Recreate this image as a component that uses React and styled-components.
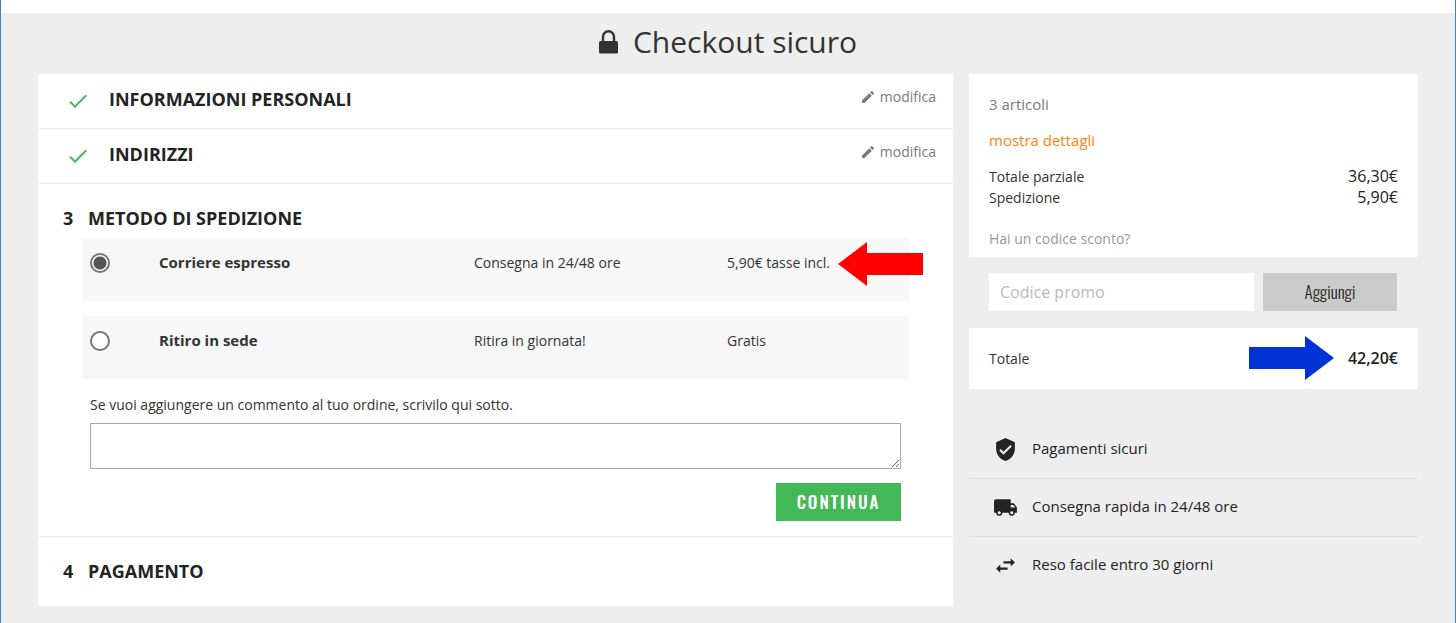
import React from "react";
import styled, { createGlobalStyle, css } from "styled-components";
import {
  MdCheck,
  MdEdit,
  MdLocalShipping,
  MdSwapHoriz,
  MdVerifiedUser,
} from "react-icons/md";

const shippingOptions = [
  {
    id: "espresso",
    name: "Corriere espresso",
    delay: "Consegna in 24/48 ore",
    price: "5,90€ tasse incl.",
    highlighted: true,
  },
  {
    id: "sede",
    name: "Ritiro in sede",
    delay: "Ritira in giornata!",
    price: "Gratis",
  },
];

const reassurances = [
  { icon: MdVerifiedUser, text: "Pagamenti sicuri" },
  { icon: MdLocalShipping, text: "Consegna rapida in 24/48 ore" },
  { icon: MdSwapHoriz, text: "Reso facile entro 30 giorni" },
];

const LockIcon = () => (
  <svg width="19" height="24" viewBox="0 0 19 24" aria-hidden="true">
    <path
      d="M4 11V6.7a5.5 5.5 0 0 1 11 0V11"
      fill="none"
      stroke="currentColor"
      strokeWidth="2.4"
    />
    <rect y="11" width="19" height="12.5" rx="1.5" fill="currentColor" />
  </svg>
);

const CompletedStep = ({ title }) => (
  <DoneStep>
    <CheckIcon />
    <StepTitle>{title}</StepTitle>
    <EditLink href="#">
      <MdEdit size={16} />
      modifica
    </EditLink>
  </DoneStep>
);

const App = () => {
  return (
    <Page>
      <GlobalStyle />
      <Title>
        <LockIcon />
        Checkout sicuro
      </Title>
      <Columns>
        <Steps>
          <CompletedStep title="Informazioni personali" />
          <CompletedStep title="Indirizzi" />

          <ShippingStep>
            <NumberedTitle>
              <span>3</span>Metodo di spedizione
            </NumberedTitle>
            <Options>
              {shippingOptions.map((option) => (
                <Option key={option.id}>
                  <Radio
                    type="radio"
                    name="shipping"
                    defaultChecked={option.id === "espresso"}
                  />
                  <OptionName>{option.name}</OptionName>
                  <span>{option.delay}</span>
                  <Price>
                    {option.price}
                    {option.highlighted && (
                      <RedArrow viewBox="0 0 85 44" aria-hidden="true">
                        <path d="M0 22L29 0V11H85V33H29V44Z" />
                      </RedArrow>
                    )}
                  </Price>
                </Option>
              ))}
            </Options>
            <Comment>
              <label htmlFor="comment">
                Se vuoi aggiungere un commento al tuo ordine, scrivilo qui
                sotto.
              </label>
              <textarea id="comment" />
              <ContinueButton type="submit">Continua</ContinueButton>
            </Comment>
          </ShippingStep>

          <PaymentStep>
            <NumberedTitle>
              <span>4</span>Pagamento
            </NumberedTitle>
          </PaymentStep>
        </Steps>

        <aside>
          <Summary>
            <Count>3 articoli</Count>
            <DetailsLink href="#">mostra dettagli</DetailsLink>
            <Line>
              Totale parziale <Amount>36,30€</Amount>
            </Line>
            <Line>
              Spedizione <Amount>5,90€</Amount>
            </Line>
            <PromoLink href="#">Hai un codice sconto?</PromoLink>
          </Summary>

          <Promo>
            <input placeholder="Codice promo" aria-label="Codice promo" />
            <AddButton type="submit">Aggiungi</AddButton>
          </Promo>

          <Total>
            Totale
            <Amount $bold>
              <BlueArrow viewBox="0 0 85 44" aria-hidden="true">
                <path d="M85 22L56 0V11H0V33H56V44Z" />
              </BlueArrow>
              42,20€
            </Amount>
          </Total>

          <Reassurance>
            {reassurances.map(({ icon: Icon, text }) => (
              <li key={text}>
                <Icon size={25} />
                {text}
              </li>
            ))}
          </Reassurance>
        </aside>
      </Columns>
    </Page>
  );
};

export default App;

const GlobalStyle = createGlobalStyle`
  * {
    box-sizing: border-box;
  }
  body {
    margin: 0;
    background: #eee;
    color: #333;
    font-family: "Open Sans", sans-serif;
    font-size: 14px;
    line-height: 21px;
  }
  h1, h2, ul {
    margin: 0;
    padding: 0;
  }
  a {
    text-decoration: none;
  }
  input, textarea, button {
    margin: 0;
    border: 0;
    border-radius: 0;
    font-family: inherit;
  }
`;

const Page = styled.div`
  min-height: 100vh;
  padding: 0 37px 17px;
  border: 1px solid #3f82cc;
  border-width: 0 1px;
  background: linear-gradient(#fff 13px, #eee 13px);
`;

const Title = styled.h1`
  display: flex;
  align-items: center;
  justify-content: center;
  gap: 15px;
  padding: 22px 0 12px;
  font-size: 30px;
  font-weight: 500;
  line-height: 40px;
`;

const Columns = styled.div`
  display: grid;
  grid-template-columns: 915fr 449fr;
  gap: 16px;
  align-items: start;
`;

const Steps = styled.main`
  background: #fff;

  > section + section {
    border-top: 1px solid #eee;
  }
`;

const DoneStep = styled.section`
  display: flex;
  align-items: flex-start;
  padding: 12px 17px 15px 28px;
`;

const CheckIcon = styled(MdCheck)`
  width: 24px;
  height: 24px;
  margin: 3px 19px 0 0;
  color: #42b856;
`;

const stepHeading = css`
  color: #232323;
  font-size: 18px;
  font-weight: 700;
  line-height: 26px;
  text-transform: uppercase;
`;

const StepTitle = styled.h2`
  ${stepHeading}
`;

const EditLink = styled.a`
  display: flex;
  align-items: center;
  gap: 4px;
  margin-left: auto;
  color: #7a7a7a;
`;

const ShippingStep = styled.section`
  padding: 21px 44px 15px 25px;
`;

const PaymentStep = styled.section`
  padding: 21px 25px 22px;
`;

const NumberedTitle = styled.h2`
  ${stepHeading}

  span {
    display: inline-block;
    width: 25px;
  }
`;

const Options = styled.div`
  display: grid;
  gap: 15px;
  margin: 7px 0 15px 19px;
`;

const Option = styled.label`
  display: grid;
  grid-template-columns: 69px 315fr 253fr 174fr;
  align-items: center;
  padding: 14px 8px 28px;
  background: #f7f7f7;
`;

const Radio = styled.input`
  appearance: none;
  width: 20px;
  height: 20px;
  border: 2px solid #757575;
  border-radius: 50%;
  background: #fff;

  &:checked {
    background: radial-gradient(circle, #555 6px, #fff 7px);
  }
`;

const OptionName = styled.span`
  font-size: 15px;
  font-weight: 700;
`;

const Price = styled.span`
  position: relative;
`;

const arrow = css`
  position: absolute;
  width: 85px;
  height: 44px;
`;

const RedArrow = styled.svg`
  ${arrow}
  top: -10px;
  left: 111px;
  fill: #f00;
`;

const BlueArrow = styled.svg`
  ${arrow}
  top: -12px;
  right: calc(100% + 14px);
  fill: #0033d6;
`;

const Comment = styled.div`
  display: flex;
  flex-direction: column;
  gap: 8px;
  margin: 0 8px 0 27px;

  textarea {
    height: 46px;
    border: 1px solid #aaa;
    background: #fff;
  }
`;

const ContinueButton = styled.button`
  align-self: flex-end;
  width: 125px;
  height: 38px;
  margin-top: 6px;
  padding: 0 0 2px;
  background: #42b856;
  color: #fff;
  font-family: Oswald, sans-serif;
  font-size: 17px;
  font-weight: 500;
  letter-spacing: 2px;
  text-transform: uppercase;
`;

const Summary = styled.section`
  display: flex;
  flex-direction: column;
  padding: 20px 20px 8px;
  background: #fff;
`;

const Count = styled.span`
  color: #7a7a7a;
  font-size: 15px;
`;

const DetailsLink = styled.a`
  margin: 15px 0;
  color: #ff8212;
  font-size: 15px;
`;

const Line = styled.div`
  display: flex;
  justify-content: space-between;
`;

const Amount = styled.span`
  position: relative;
  color: #232323;
  font-size: 16px;
  font-weight: ${(props) => (props.$bold ? 600 : 400)};
`;

const PromoLink = styled.a`
  margin-top: 20px;
  color: #999;
`;

const Promo = styled.form`
  display: flex;
  gap: 9px;
  padding: 16px 21px 17px 20px;

  input {
    flex: 1;
    min-width: 0;
    height: 38px;
    padding: 0 11px;
    background: #fff;
    font-size: 16px;
  }
  input::placeholder {
    color: #bbb;
  }
`;

const AddButton = styled.button`
  width: 134px;
  height: 38px;
  padding: 0 0 2px;
  background: #cbcbcb;
  color: #232323;
  font-family: Oswald, sans-serif;
  font-size: 17px;
  font-weight: 300;
`;

const Total = styled(Line)`
  padding: 20px;
  background: #fff;
`;

const Reassurance = styled.ul`
  margin-top: 31px;
  color: #232323;
  font-size: 15px;
  line-height: 22px;
  list-style: none;

  li {
    display: flex;
    align-items: flex-start;
    gap: 14px;
    padding: 16px 0 16px 24px;
    border-top: 1px solid #dcdcdc;
  }
  li:first-child {
    border-color: transparent;
  }
`;
